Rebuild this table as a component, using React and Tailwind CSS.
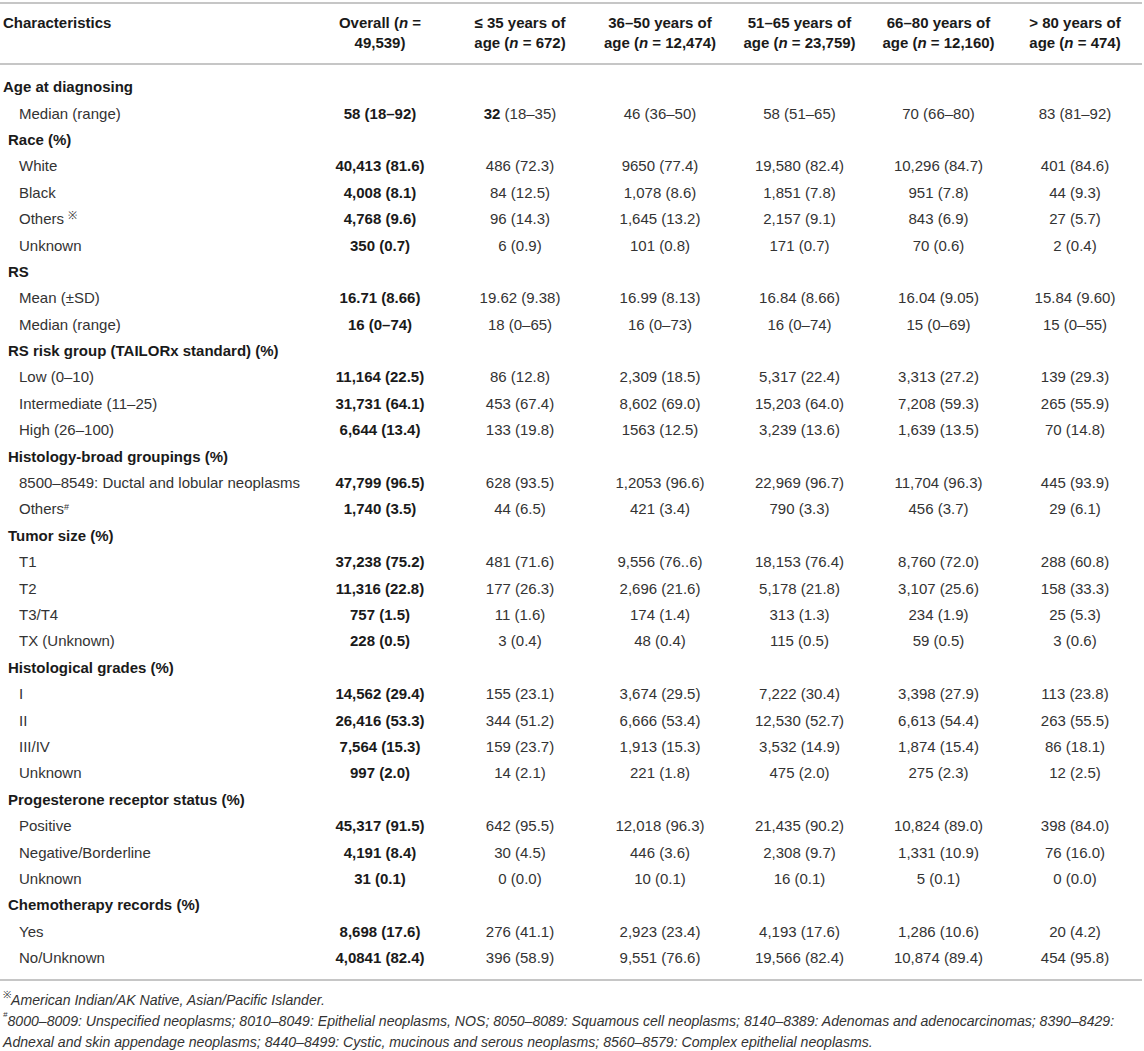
const COLS = 'grid grid-cols-[310px_140px_140px_140px_139px_139px_134px]';

const SECTIONS = [
  {
    title: 'Age at diagnosing',
    first: true,
    rows: [
      { label: 'Median (range)', values: ['58 (18–92)', <><b className="font-bold text-[#1a1a1a]">32</b> (18–35)</>, '46 (36–50)', '58 (51–65)', '70 (66–80)', '83 (81–92)'] },
    ],
  },
  {
    title: 'Race (%)',
    rows: [
      { label: 'White', values: ['40,413 (81.6)', '486 (72.3)', '9650 (77.4)', '19,580 (82.4)', '10,296 (84.7)', '401 (84.6)'] },
      { label: 'Black', values: ['4,008 (8.1)', '84 (12.5)', '1,078 (8.6)', '1,851 (7.8)', '951 (7.8)', '44 (9.3)'] },
      { label: <>Others <sup className="text-[11px]">※</sup></>, values: ['4,768 (9.6)', '96 (14.3)', '1,645 (13.2)', '2,157 (9.1)', '843 (6.9)', '27 (5.7)'] },
      { label: 'Unknown', values: ['350 (0.7)', '6 (0.9)', '101 (0.8)', '171 (0.7)', '70 (0.6)', '2 (0.4)'] },
    ],
  },
  {
    title: 'RS',
    rows: [
      { label: 'Mean (±SD)', values: ['16.71 (8.66)', '19.62 (9.38)', '16.99 (8.13)', '16.84 (8.66)', '16.04 (9.05)', '15.84 (9.60)'] },
      { label: 'Median (range)', values: ['16 (0–74)', '18 (0–65)', '16 (0–73)', '16 (0–74)', '15 (0–69)', '15 (0–55)'] },
    ],
  },
  {
    title: 'RS risk group (TAILORx standard) (%)',
    rows: [
      { label: 'Low (0–10)', values: ['11,164 (22.5)', '86 (12.8)', '2,309 (18.5)', '5,317 (22.4)', '3,313 (27.2)', '139 (29.3)'] },
      { label: 'Intermediate (11–25)', values: ['31,731 (64.1)', '453 (67.4)', '8,602 (69.0)', '15,203 (64.0)', '7,208 (59.3)', '265 (55.9)'] },
      { label: 'High (26–100)', values: ['6,644 (13.4)', '133 (19.8)', '1563 (12.5)', '3,239 (13.6)', '1,639 (13.5)', '70 (14.8)'] },
    ],
  },
  {
    title: 'Histology-broad groupings (%)',
    rows: [
      { label: '8500–8549: Ductal and lobular neoplasms', values: ['47,799 (96.5)', '628 (93.5)', '1,2053 (96.6)', '22,969 (96.7)', '11,704 (96.3)', '445 (93.9)'] },
      { label: <>Others<sup className="text-[9px]">#</sup></>, values: ['1,740 (3.5)', '44 (6.5)', '421 (3.4)', '790 (3.3)', '456 (3.7)', '29 (6.1)'] },
    ],
  },
  {
    title: 'Tumor size (%)',
    rows: [
      { label: 'T1', values: ['37,238 (75.2)', '481 (71.6)', '9,556 (76..6)', '18,153 (76.4)', '8,760 (72.0)', '288 (60.8)'] },
      { label: 'T2', values: ['11,316 (22.8)', '177 (26.3)', '2,696 (21.6)', '5,178 (21.8)', '3,107 (25.6)', '158 (33.3)'] },
      { label: 'T3/T4', values: ['757 (1.5)', '11 (1.6)', '174 (1.4)', '313 (1.3)', '234 (1.9)', '25 (5.3)'] },
      { label: 'TX (Unknown)', values: ['228 (0.5)', '3 (0.4)', '48 (0.4)', '115 (0.5)', '59 (0.5)', '3 (0.6)'] },
    ],
  },
  {
    title: 'Histological grades (%)',
    rows: [
      { label: 'I', values: ['14,562 (29.4)', '155 (23.1)', '3,674 (29.5)', '7,222 (30.4)', '3,398 (27.9)', '113 (23.8)'] },
      { label: 'II', values: ['26,416 (53.3)', '344 (51.2)', '6,666 (53.4)', '12,530 (52.7)', '6,613 (54.4)', '263 (55.5)'] },
      { label: 'III/IV', values: ['7,564 (15.3)', '159 (23.7)', '1,913 (15.3)', '3,532 (14.9)', '1,874 (15.4)', '86 (18.1)'] },
      { label: 'Unknown', values: ['997 (2.0)', '14 (2.1)', '221 (1.8)', '475 (2.0)', '275 (2.3)', '12 (2.5)'] },
    ],
  },
  {
    title: 'Progesterone receptor status (%)',
    rows: [
      { label: 'Positive', values: ['45,317 (91.5)', '642 (95.5)', '12,018 (96.3)', '21,435 (90.2)', '10,824 (89.0)', '398 (84.0)'] },
      { label: 'Negative/Borderline', values: ['4,191 (8.4)', '30 (4.5)', '446 (3.6)', '2,308 (9.7)', '1,331 (10.9)', '76 (16.0)'] },
      { label: 'Unknown', values: ['31 (0.1)', '0 (0.0)', '10 (0.1)', '16 (0.1)', '5 (0.1)', '0 (0.0)'] },
    ],
  },
  {
    title: 'Chemotherapy records (%)',
    rows: [
      { label: 'Yes', values: ['8,698 (17.6)', '276 (41.1)', '2,923 (23.4)', '4,193 (17.6)', '1,286 (10.6)', '20 (4.2)'] },
      { label: 'No/Unknown', values: ['4,0841 (82.4)', '396 (58.9)', '9,551 (76.6)', '19,566 (82.4)', '10,874 (89.4)', '454 (95.8)'] },
    ],
  },
];

const HEADERS = [
  ['≤ 35 years of', ' = 672)'],
  ['36–50 years of', ' = 12,474)'],
  ['51–65 years of', ' = 23,759)'],
  ['66–80 years of', ' = 12,160)'],
  ['> 80 years of', ' = 474)'],
];

function Row({ label, values }) {
  return (
    <div className={`${COLS} h-[26.4px] items-center`}>
      <div className="pl-[19px] text-[#333]">{label}</div>
      {values.map((v, i) => (
        <div key={i} className={i === 0 ? 'text-center font-bold text-[#1a1a1a]' : 'text-center text-[#333]'}>{v}</div>
      ))}
    </div>
  );
}

export default function App() {
  return (
    <div className="w-[1144px] bg-white pt-[2px] font-['Liberation_Sans',Arial,sans-serif] text-[15px] leading-[20px]">
      <div className="w-[1142px]">
        <div className="h-[2px] bg-[#c6c6c6]" />
        <div className={`${COLS} pt-[9px] pb-[10px] font-bold text-[#1a1a1a]`}>
          <div className="pl-[3px]">Characteristics</div>
          <div className="text-center">Overall (<i>n</i> =<br />49,539)</div>
          {HEADERS.map((h) => (
            <div key={h[0]} className="text-center">{h[0]}<br />age (<i>n</i>{h[1]}</div>
          ))}
        </div>
        <div className="h-[2px] bg-[#c6c6c6]" />
        <div className="pt-[9px] pb-[8px]">
          {SECTIONS.map((s) => (
            <div key={s.title}>
              <div className={`h-[26.4px] flex items-center font-bold text-[#1a1a1a] ${s.first ? 'pl-[3px]' : 'pl-[8px]'}`}>{s.title}</div>
              {s.rows.map((r, i) => <Row key={i} {...r} />)}
            </div>
          ))}
        </div>
        <div className="h-[2px] bg-[#c6c6c6]" />
        <div className="pt-[9px] pl-[3px] text-[14.1px] leading-[21px] italic text-[#333] whitespace-nowrap">
          <p><span className="not-italic text-[10px] align-top leading-none">※</span>American Indian/AK Native, Asian/Pacific Islander.</p>
          <p>
            <span className="text-[8px] align-top leading-none">#</span>8000–8009: Unspecified neoplasms; 8010–8049: Epithelial neoplasms, NOS; 8050–8089: Squamous cell neoplasms; 8140–8389: Adenomas and adenocarcinomas; 8390–8429:<br />
            Adnexal and skin appendage neoplasms; 8440–8499: Cystic, mucinous and serous neoplasms; 8560–8579: Complex epithelial neoplasms.
          </p>
        </div>
      </div>
    </div>
  );
}
